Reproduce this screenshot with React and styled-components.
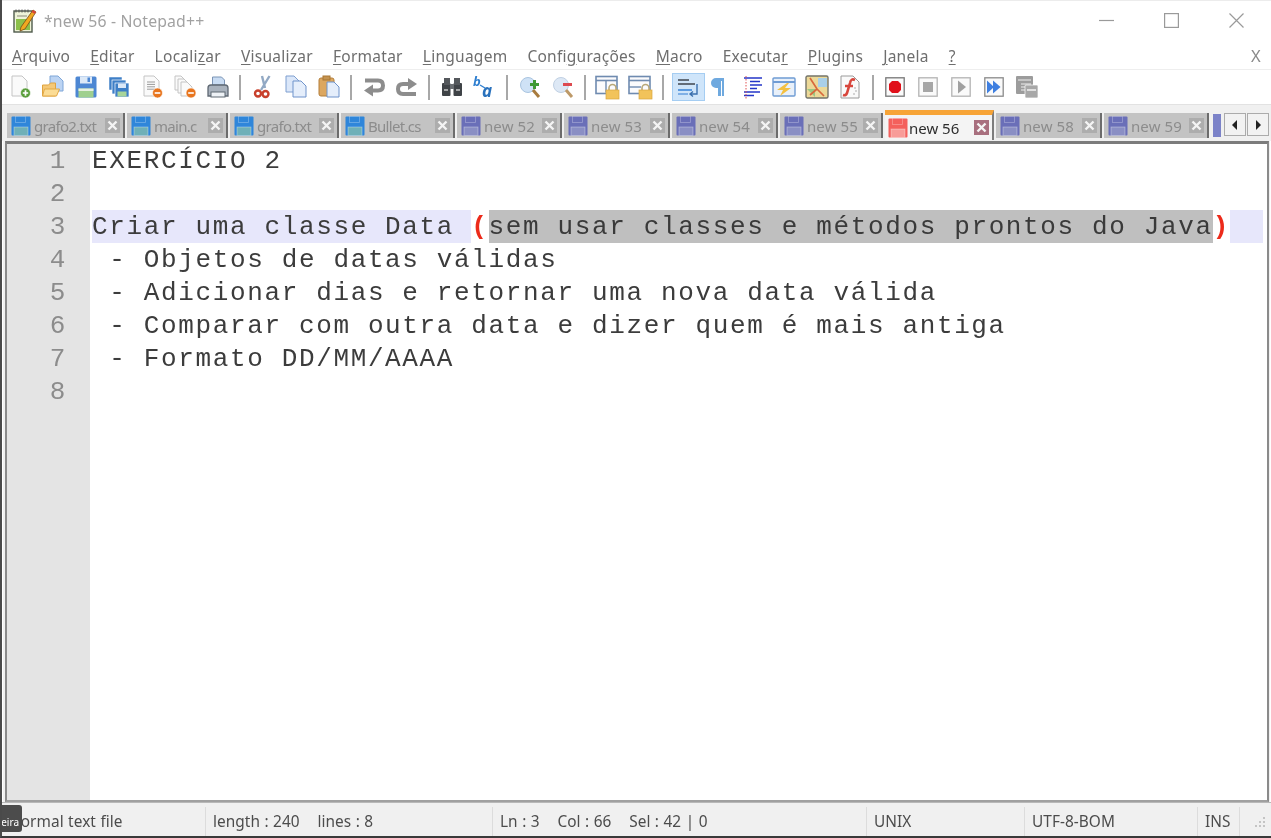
import React from "react";
import styled, { createGlobalStyle, css } from "styled-components";

const Global = createGlobalStyle`
  html, body { margin: 0; padding: 0; background: #fff; }
  #root { width: 1271px; height: 838px; overflow: hidden; }
`;
const UI = `"Noto Sans", "Open Sans", sans-serif`;
const MONO = `"Liberation Mono", monospace`;

const Win = styled.div`
  position: relative; width: 1271px; height: 838px; box-sizing: border-box;
  display: flex; flex-direction: column; background: #fff; overflow: hidden;
  border-left: 2px solid #4a4a4a; border-bottom: 2px solid #3a3a3a;
  font-family: ${UI}; filter: blur(0.35px);
`;
const TitleBar = styled.div`
  height: 42px; flex: none; display: flex; align-items: center; padding: 0 0 2px 11px; background: #fff;
  border-top: 1px solid #ececec; box-sizing: border-box;
`;
const TitleText = styled.span`
  margin-left: 7px; font-size: 15.8px; color: #a2a2a2; letter-spacing: 0.15px;
`;
const WinButtons = styled.div`
  margin-left: auto; display: flex; align-items: center; gap: 50px; padding: 0 27px 1px 0; color: #9a9a9a;
`;
const MenuBar = styled.div`
  height: 28px; flex: none; display: flex; align-items: center; padding: 0 10px 0 10px; box-sizing: border-box;
  gap: 20px; font-size: 15.5px; letter-spacing: 0.26px; color: #6e6e6e; border-bottom: 1px solid #eeeeee;
`;
const MenuItem = styled.span`
  white-space: nowrap;
  u { text-underline-offset: 2px; text-decoration-thickness: 1px; }
`;
const MenuClose = styled.span`margin-left: auto; color: #8a8a8a; font-size: 16.5px;`;
const ToolBar = styled.div`
  height: 34px; flex: none; display: flex; align-items: center; padding-left: 1.5px; background: #fff;
`;
const ToolBtn = styled.div`
  width: 33px; height: 28px; flex: none; display: flex; align-items: center; justify-content: center; box-sizing: border-box;
  ${(p) => p.$active && css`background: #cfe5fa; border: 1px solid #a5cdf2; margin-left: 3px; margin-right: -3px;`}
`;
const ToolSep = styled.div`
  width: 2px; height: 25px; flex: none; background: #a8a8a8; margin: 0 4.95px;
`;
const TabBar = styled.div`
  height: 37px; flex: none; display: flex; align-items: flex-start; padding: 5px 3px 0 5px; box-sizing: border-box;
  background: #f0f0f0; border-top: 1px solid #e2e2e2; gap: 0; overflow: hidden;
`;
const Tab = styled.div`
  flex: none; box-sizing: border-box; display: flex; align-items: center; height: 25px; margin-top: 3px;
  padding: 0 3px 0 4px; background: #c3c3c3; color: #8c8c8c; font-size: 15px;
  letter-spacing: ${(p) => (p.$tight ? "-0.7px" : "0.1px")};
  border-right: 2px solid #6c6c6c; margin-right: 2px;
  ${(p) => p.$active && css`
    height: 30px; margin-top: 0; background: #f4f4f4; color: #2e2e2e; border-top: 5px solid #f7a437;
    border-right: 2px solid #7d7d7d; padding-left: 3px; letter-spacing: 0;
  `}
`;
const TabLabel = styled.span`margin-left: ${(p) => (p.$active ? 1 : 3)}px; white-space: nowrap;`;
const TabClose = styled.span`
  margin-left: auto; margin-right: 0; width: 15px; height: 15px; flex: none; display: flex; align-items: center; justify-content: center;
  background: ${(p) => (p.$active ? "#a86f7e" : "#adadad")};
`;
const PartTab = styled.div`
  width: 8px; height: 23px; margin: 4px 0 0 2px; background: #7b82c8; flex: none;
`;
const Scroller = styled.div`
  margin-left: 3px; flex: none; display: flex; margin-top: 3px;
`;
const ScrollBtn = styled.div`
  width: 22px; height: 23px; box-sizing: border-box; display: flex; align-items: center; justify-content: center;
  background: #f2f2f2; border: 1px solid #ababab; margin-right: 1px;
`;
const EditorFrame = styled.div`
  flex: 1; min-height: 0; display: flex; margin: 0 1px; box-sizing: border-box;
  background: #f0f0f0; padding: 0 1px 0 2px;
`;
const Editor = styled.div`
  flex: 1; display: flex; background: #fff; min-width: 0;
  border-top: 3px solid #7c7c7c; border-left: 2px solid #8a8a8a; border-right: 2px solid #8a8a8a; border-bottom: 2px solid #a0a0a0;
  font-family: ${MONO}; font-size: 26px; letter-spacing: 1.64px; line-height: 35px; color: #3c3c3c;
`;
const Gutter = styled.div`
  width: 83px; flex: none; background: #e4e4e4; color: #8c8c8c; text-align: right; padding-right: 23px; box-sizing: border-box;
`;
const GutterNum = styled.div`height: 33px;`;
const Code = styled.div`flex: 1; min-width: 0; padding: 0 4px 0 2px;`;
const Line = styled.div`height: 33px; display: flex; white-space: pre;`;
const Hl = styled.span`background: #e7e7fb; ${(p) => p.$fill && "flex: 1;"}`;
const Paren = styled.span`color: #ec2a1a; font-weight: bold; background: #fff;`;
const Sel = styled.span`background: #bfbfbf; color: #3a3a3a;`;
const StatusBar = styled.div`
  height: 34px; flex: none; display: flex; align-items: flex-end; background: #f0f0f0; box-sizing: border-box;
  border-top: 1px solid #b8b8b8; font-size: 15.4px; color: #4c4c4c; position: relative;
`;
const Cell = styled.div`
  flex: none; width: ${(p) => p.$w}px; box-sizing: border-box; height: 29px; display: flex; align-items: center;
  padding-left: 7px; white-space: pre; border-right: 1px solid #dcdcdc; letter-spacing: 0.05px; word-spacing: 0.4px;
`;
const Grip = styled.div`margin-left: auto; margin-right: 4px; margin-bottom: 2px;`;
const Hint = styled.div`
  position: absolute; left: -2px; bottom: 4px; width: 22px; height: 27px; background: #4c4c4c; color: #fff;
  font-size: 10px; border-radius: 0 3px 3px 0; display: flex; align-items: flex-end; justify-content: flex-end;
  padding-bottom: 3px; box-sizing: border-box; padding-right: 3px; overflow: hidden;
`;

const Ic = ({ children, s = 24, vb = "0 0 24 24" }) => (
  <svg width={s} height={s} viewBox={vb} fill="none" style={{ display: "block", overflow: "visible" }}>{children}</svg>
);
const Disk = ({ c = "#3b7fd0", s = 24, pale = "#8fd08a" }) => (
  <Ic s={s}>
    <rect x="1.5" y="1.5" width="21" height="21" rx="1.5" fill={c} />
    <rect x="6" y="1.5" width="12" height="7" fill="#dbe8f7" />
    <rect x="13.5" y="2.5" width="2.5" height="4.5" fill={c} />
    <rect x="4.5" y="13.5" width="15" height="9" fill={pale} />
    <rect x="4.5" y="13.5" width="15" height="2.5" fill="#e6f0e2" />
  </Ic>
);
const TabDisk = ({ c, pale }) => (
  <Ic s={20} vb="0 0 20 20">
    <rect x="0.5" y="0.5" width="19" height="19" rx="1" fill={c} />
    <rect x="4.5" y="0.5" width="10" height="6" fill={c} stroke="#ffffff55" strokeWidth="0.8" />
    <rect x="3" y="11" width="14" height="8.5" fill={pale} stroke="#ffffff66" strokeWidth="0.8" />
  </Ic>
);
const Page = ({ x = 4, y = 1, w = 15, h = 20, fill = "#fafafa", stroke = "#c4c4c4" }) => (
  <path d={`M${x} ${y}h${w - 5}l5 5v${h - 5}h-${w}z`} fill={fill} stroke={stroke} />
);
const Lines = ({ x, y, n = 4, w = 8 }) => (
  <>
    {Array.from({ length: n }, (_, i) => (
      <path key={i} d={`M${x} ${y + i * 2.4}h${w}`} stroke="#9a9a9a" strokeWidth="1" />
    ))}
  </>
);
const Badge = ({ x, y, r = 5, c = "#e8751e" }) => (
  <>
    <circle cx={x} cy={y} r={r} fill={c} stroke="#fff" strokeWidth=".6" />
    <path d={`M${x - 2.8} ${y}h5.6`} stroke="#fff" strokeWidth="1.6" />
  </>
);
const Lock = ({ x = 11, y = 11 }) => (
  <>
    <path d={`M${x + 3} ${y + 4}v-2a3.5 3.5 0 0 1 7 0v2`} stroke="#b8a878" strokeWidth="1.6" />
    <rect x={x} y={y + 4} width="13" height="9" fill="#f2c35a" stroke="#d9a63f" strokeWidth=".7" />
  </>
);
const PanePair = ({ horizontal }) => (
  <Ic>
    <rect x="1" y="1.5" width="21" height="17" fill="#fbfbfd" stroke="#6f8bb0" strokeWidth="1.6" />
    <path d="M1 5.5h21" stroke="#6f8bb0" strokeWidth="1.6" />
    {horizontal ? <path d="M1 12h12" stroke="#6f8bb0" strokeWidth="1.4" /> : <path d="M11 5.5v12" stroke="#6f8bb0" strokeWidth="1.4" />}
    <Lock />
  </Ic>
);
const Icons = {
  new: () => (<Ic><Page /><circle cx="17.5" cy="18" r="5" fill="#5a9e3c" stroke="#fff" strokeWidth=".6" /><path d="M14.8 18h5.4M17.5 15.3v5.4" stroke="#fff" strokeWidth="1.7" /></Ic>),
  open: () => (<Ic><Page x={9} y={1} w={13} h={15} fill="#bcd4f3" stroke="#7ea6d8" /><path d="M1.5 10h6l2-2h5v13H1.5z" fill="#f4c877" stroke="#dfa33f" /><path d="M1.500 21l2-7h15l-3 7z" fill="#fbdc95" stroke="#e3a945" /></Ic>),
  save: () => <Disk c="#4d87d3" pale="#9fd08f" />,
  saveAll: () => (<Ic><rect x="2" y="2" width="13" height="13" fill="#3e7fc7" stroke="#fff" strokeWidth=".5" /><rect x="5" y="5" width="14" height="14" fill="#3e7fc7" stroke="#fff" strokeWidth=".7" /><rect x="8" y="8" width="14" height="14" fill="#3e7fc7" stroke="#fff" strokeWidth=".7" /><rect x="11" y="8.5" width="8" height="4.5" fill="#dbe8f7" /><rect x="10.5" y="16.5" width="9" height="5" fill="#a8d59a" /></Ic>),
  close: () => (<Ic><Page x={4} y={1} w={15} h={20} /><Lines x={7} y={7} /><Badge x={17.5} y={18} /></Ic>),
  closeAll: () => (<Ic><Page x={2} y={1} w={11} h={14} /><Page x={5} y={4} w={11} h={14} /><Page x={8} y={7} w={11} h={14} /><Badge x={18} y={18} /></Ic>),
  print: () => (<Ic><path d="M6.5 10V2h9l3 3v5z" fill="#c9dcf3" stroke="#7b94b5" /><path d="M2 21v-8q0-3 3-3h14q3 0 3 3v8z" fill="#a9b2bd" stroke="#5f6873" strokeWidth="1.3" /><rect x="5" y="17" width="14" height="5" fill="#eef2f6" stroke="#5f6873" /></Ic>),
  cut: () => (<Ic><path d="M18.500 1L10 15M11 1l3 12" stroke="#92a9c4" strokeWidth="2.4" /><circle cx="7" cy="18.500" r="3" stroke="#c8402c" strokeWidth="2.4" /><circle cx="14.500" cy="19" r="3" stroke="#c8402c" strokeWidth="2.4" /></Ic>),
  copy: () => (<Ic><Page x={2} y={1} w={13} h={16} fill="#dbe7f9" stroke="#7e9fd0" /><Page x={9} y={6} w={13} h={16} fill="#e5eefb" stroke="#6f93cb" /></Ic>),
  paste: () => (<Ic><rect x="2" y="3" width="15" height="18" rx="2" fill="#dca760" stroke="#b47f3a" /><rect x="6" y="1" width="7" height="4" fill="#c49350" stroke="#a97733" /><Page x={10} y={7} w={12} h={15} fill="#e5eefb" stroke="#6f93cb" /></Ic>),
  undo: () => (<Ic><path d="M3 5.500h13q5 0 5 5t-5 5H10" stroke="#8d8d8d" strokeWidth="4" /><path d="M11 9.500l-9 6 9 6z" fill="#8d8d8d" /></Ic>),
  redo: () => (<Ic><path d="M21 19H8q-5 0-5-5t5-5h6" stroke="#8d8d8d" strokeWidth="4" /><path d="M13 3l9 6-9 6z" fill="#8d8d8d" /></Ic>),
  find: () => (<Ic><rect x="2" y="8" width="8.5" height="13" rx="1" fill="#3f4347" /><rect x="13.5" y="8" width="8.5" height="13" rx="1" fill="#3f4347" /><rect x="4" y="3" width="6" height="7" fill="#54585c" /><rect x="14" y="3" width="6" height="7" fill="#54585c" /><rect x="10" y="9" width="4" height="5" fill="#6a6e72" /><path d="M4 15h4M16 15h4" stroke="#c8c8c8" strokeWidth="1.4" /></Ic>),
  replace: () => (<Ic><text x="0" y="11" fontFamily={UI} fontWeight="700" fontStyle="italic" fontSize="13" fill="#2f7fd0">b</text><text x="9" y="22" fontFamily={UI} fontWeight="700" fontStyle="italic" fontSize="17" fill="#2a72bd">a</text><path d="M7 10l5 3" stroke="#2f7fd0" strokeWidth="1.4" /></Ic>),
  zoomIn: () => (<Ic><circle cx="10" cy="10" r="7.5" fill="#cfe2f6" stroke="#a9c4e0" /><path d="M15 15l6 7" stroke="#a87b3e" strokeWidth="3" /><path d="M12 9.500h9M16.500 5v9" stroke="#3f9a34" strokeWidth="3" /></Ic>),
  zoomOut: () => (<Ic><circle cx="10" cy="10" r="7.5" fill="#dde8f5" stroke="#c0d0e3" /><path d="M15 15l6 7" stroke="#bd9968" strokeWidth="3" /><path d="M12 9.500h9" stroke="#dd4a50" strokeWidth="3" /></Ic>),
  sync1: () => <PanePair />,
  sync2: () => <PanePair horizontal />,
  wrap: () => (<Ic><path d="M2 5h11M2 9h17" stroke="#40464f" strokeWidth="1.7" /><rect x="2" y="14" width="14" height="2" fill="#5c9be0" /><rect x="2" y="18" width="10" height="2" fill="#7fb0e6" /><path d="M21 9v10h-6M17 16.500L14 19l3 2.500" stroke="#3b70ae" strokeWidth="1.4" /></Ic>),
  para: () => (<Ic><path d="M18 3H10a5 5 0 0 0 0 10h2v8h3V6h1v15h2z" fill="#6fa9df" /></Ic>),
  indent: () => (<Ic><path d="M5 3h18M11 6.500h10M11 10h12M11 13.500h7M5 17h16M5 20.500h10" stroke="#2436c8" strokeWidth="1.6" /><path d="M7 1v23" stroke="#e05050" strokeWidth="1" strokeDasharray="1.5 1.5" /></Ic>),
  doc: () => (<Ic><rect x="1" y="3" width="22" height="18" rx="1" fill="#e8f0fa" stroke="#6f9cd4" strokeWidth="1.4" /><path d="M1 7h22" stroke="#6f9cd4" strokeWidth="2" /><path d="M15 8l-10 7h6l-3 6 11-8h-6l4-5z" fill="#f3c041" /></Ic>),
  map: () => (<Ic><rect x="1" y="1" width="22" height="22" rx="1.500" fill="#ecd998" stroke="#74746a" strokeWidth="1.4" /><path d="M13 3h9v9h-9z" fill="#a9cfe8" /><path d="M2 14l8 8V14z" fill="#9bc784" /><path d="M5 3l7 11 7 7M12 14l-7 6" stroke="#d8693c" strokeWidth="1.7" /></Ic>),
  func: () => (<Ic><path d="M3 1h12l6 6v16H3z" fill="#fafafa" stroke="#9a9a9a" /><path d="M17 5q-4-2-5 3l-3 10q-1 3-4 2M7 11h8" stroke="#d8463c" strokeWidth="2.6" /><path d="M17 13v.1M18 16v.1M16 19v.1" stroke="#9a9a9a" strokeWidth="1.5" strokeLinecap="round" /></Ic>),
  record: () => (<Ic s={20} vb="0 0 20 20"><rect x=".8" y=".8" width="18.4" height="18.4" fill="#fafafa" stroke="#777" strokeWidth="1.3" /><path d="M7 4h6l3 3v6l-3 3H7l-3-3V7z" fill="#e0101a" /></Ic>),
  stop: () => (<Ic s={20} vb="0 0 20 20"><rect x=".8" y=".8" width="18.4" height="18.4" fill="#fafafa" stroke="#b4b4b4" strokeWidth="1.3" /><rect x="5" y="5" width="10" height="10" fill="#a6a6a6" /></Ic>),
  play: () => (<Ic s={20} vb="0 0 20 20"><rect x=".8" y=".8" width="18.4" height="18.4" fill="#fafafa" stroke="#b4b4b4" strokeWidth="1.3" /><path d="M7 3.500L15 10l-8 6.500z" fill="#a0a0a0" /></Ic>),
  multi: () => (<Ic s={20} vb="0 0 20 20"><rect x=".8" y=".8" width="18.4" height="18.4" fill="#fafafa" stroke="#8a8a8a" strokeWidth="1.3" /><path d="M3 3.500L10 10l-7 6.500z" fill="#3f7fe0" /><path d="M9 3.500L16.500 10 9 16.500z" fill="#3f7fe0" /></Ic>),
  saveMacro: () => (<Ic><rect x="1" y="1" width="17" height="18" rx="1" fill="#9c9c9c" /><path d="M3 5h13M6 9h10M6 12h4M6 15h4" stroke="#eee" strokeWidth="1.2" /><rect x="10" y="10" width="13" height="13" rx="1" fill="#a8a8a8" stroke="#fff" strokeWidth=".7" /><path d="M12 15h9" stroke="#eee" strokeWidth="1.6" /></Ic>),
};

const TOOLS = [
  "new", "open", "save", "saveAll", "close", "closeAll", "print", "|",
  "cut", "copy", "paste", "|", "undo", "redo", "|", "find", "replace", "|",
  "zoomIn", "zoomOut", "|", "sync1", "sync2", "|",
  "wrap", "para", "indent", "doc", "map", "func", "|",
  "record", "stop", "play", "multi", "saveMacro",
];
const MENUS = [["A", "rquivo"], ["E", "ditar"], ["", "Locali", "z", "ar"], ["V", "isualizar"], ["F", "ormatar"], ["L", "inguagem"], ["", "Confi", "g", "urações"], ["M", "acro"], ["", "Executa", "r"], ["P", "lugins"], ["J", "anela"], ["?", ""]];
const BLUE = ["#2f86da", "#6fb0b8"], PURPLE = ["#6a6fb8", "#8a8fc4"], RED = ["#f4605c", "#f89c98"];
const TABS = [
  ["grafo2.txt", 118, BLUE, false, true], ["main.c", 101, BLUE, false, true], ["grafo.txt", 109, BLUE, false, true], ["Bullet.cs", 114, BLUE, false, true],
  ["new 52", 105, PURPLE], ["new 53", 106, PURPLE], ["new 54", 106, PURPLE], ["new 55", 103, PURPLE],
  ["new 56", 109, RED, true], ["new 58", 106, PURPLE], ["new 59", 105, PURPLE],
];
const renderMenu = (m) => {
  if (m[0] === "") {
    return <>{m[1]}<u>{m[2]}</u>{m[3] || ""}</>;
  }
  return <><u>{m[0]}</u>{m[1]}</>;
};
const XMark = () => (
  <svg width="11" height="11" viewBox="0 0 11 11"><path d="M1.5 1.5l8 8M9.500 1.500l-8 8" stroke="#f4f4f4" strokeWidth="2.4" /></svg>
);

export default function App() {
  return (
    <Win>
      <Global />
      <TitleBar>
        <svg width="24" height="25" viewBox="0 0 24 25" fill="none">
          <rect x="1" y="3" width="18" height="21" fill="#eef3d8" stroke="#4f5a4c" strokeWidth="1.4" />
          <rect x="3" y="11" width="14" height="11" fill="#8cc04a" />
          <path d="M3 1.500v3M6 1.500v3M9 1.500v3M12 1.500v3M15 1.500v3" stroke="#555" />
          <path d="M4 8h10" stroke="#8a8a7a" />
          <path d="M8 19L20 2l3 2-11 17-5 2z" fill="#f0a820" stroke="#7a4b16" strokeWidth=".8" />
          <path d="M20 2l3 2-1.400 2-3-2z" fill="#d6453a" />
        </svg>
        <TitleText>*new 56 - Notepad++</TitleText>
        <WinButtons>
          <svg width="15" height="15" viewBox="0 0 15 15"><path d="M0 7.500h15" stroke="#9a9a9a" strokeWidth="1.2" /></svg>
          <svg width="15" height="15" viewBox="0 0 15 15"><rect x=".6" y=".6" width="13.8" height="13.8" fill="none" stroke="#9a9a9a" strokeWidth="1.2" /></svg>
          <svg width="15" height="15" viewBox="0 0 15 15"><path d="M.5.5l14 14M14.500.5l-14 14" stroke="#9a9a9a" strokeWidth="1.2" /></svg>
        </WinButtons>
      </TitleBar>
      <MenuBar>
        {MENUS.map((m, i) => (<MenuItem key={i}>{renderMenu(m)}</MenuItem>))}
        <MenuClose>X</MenuClose>
      </MenuBar>
      <ToolBar>
        {TOOLS.map((t, i) => {
          if (t === "|") return <ToolSep key={i} />;
          const I = Icons[t];
          return <ToolBtn key={i} $active={t === "wrap"}><I /></ToolBtn>;
        })}
      </ToolBar>
      <TabBar>
        {TABS.map(([label, w, col, active, tight]) => (
          <Tab key={label} $active={active} $tight={tight} style={{ width: w }}>
            <TabDisk c={col[0]} pale={col[1]} />
            <TabLabel $active={active}>{label}</TabLabel>
            <TabClose $active={active}><XMark /></TabClose>
          </Tab>
        ))}
        <PartTab />
        <Scroller>
          <ScrollBtn><svg width="8" height="10" viewBox="0 0 8 10"><path d="M6 0v10L1 5z" fill="#222" /></svg></ScrollBtn>
          <ScrollBtn><svg width="8" height="10" viewBox="0 0 8 10"><path d="M2 0v10l5-5z" fill="#222" /></svg></ScrollBtn>
        </Scroller>
      </TabBar>
      <EditorFrame>
        <Editor>
          <Gutter>{[1, 2, 3, 4, 5, 6, 7, 8].map((n) => <GutterNum key={n}>{n}</GutterNum>)}</Gutter>
          <Code>
            <Line>EXERCÍCIO 2</Line>
            <Line />
            <Line>
              <Hl>Criar uma classe Data </Hl>
              <Paren>(</Paren>
              <Sel>sem usar classes e métodos prontos do Java</Sel>
              <Paren>)</Paren>
              <Hl $fill />
            </Line>
            <Line> - Objetos de datas válidas</Line>
            <Line> - Adicionar dias e retornar uma nova data válida</Line>
            <Line> - Comparar com outra data e dizer quem é mais antiga</Line>
            <Line> - Formato DD/MM/AAAA</Line>
            <Line />
          </Code>
        </Editor>
      </EditorFrame>
      <StatusBar>
        <Cell $w={204}>Normal text file</Cell>
        <Cell $w={287}>length : 240    lines : 8</Cell>
        <Cell $w={374}>Ln : 3    Col : 66    Sel : 42 | 0</Cell>
        <Cell $w={158}>UNIX</Cell>
        <Cell $w={173}>UTF-8-BOM</Cell>
        <Cell $w={42}>INS</Cell>
        <Grip>
          <svg width="14" height="14" viewBox="0 0 14 14" fill="#c4c4c4"><rect x="10" y="2" width="2" height="2" /><rect x="6" y="6" width="2" height="2" /><rect x="10" y="6" width="2" height="2" /><rect x="2" y="10" width="2" height="2" /><rect x="6" y="10" width="2" height="2" /><rect x="10" y="10" width="2" height="2" /></svg>
        </Grip>
        <Hint>eira</Hint>
      </StatusBar>
    </Win>
  );
}
